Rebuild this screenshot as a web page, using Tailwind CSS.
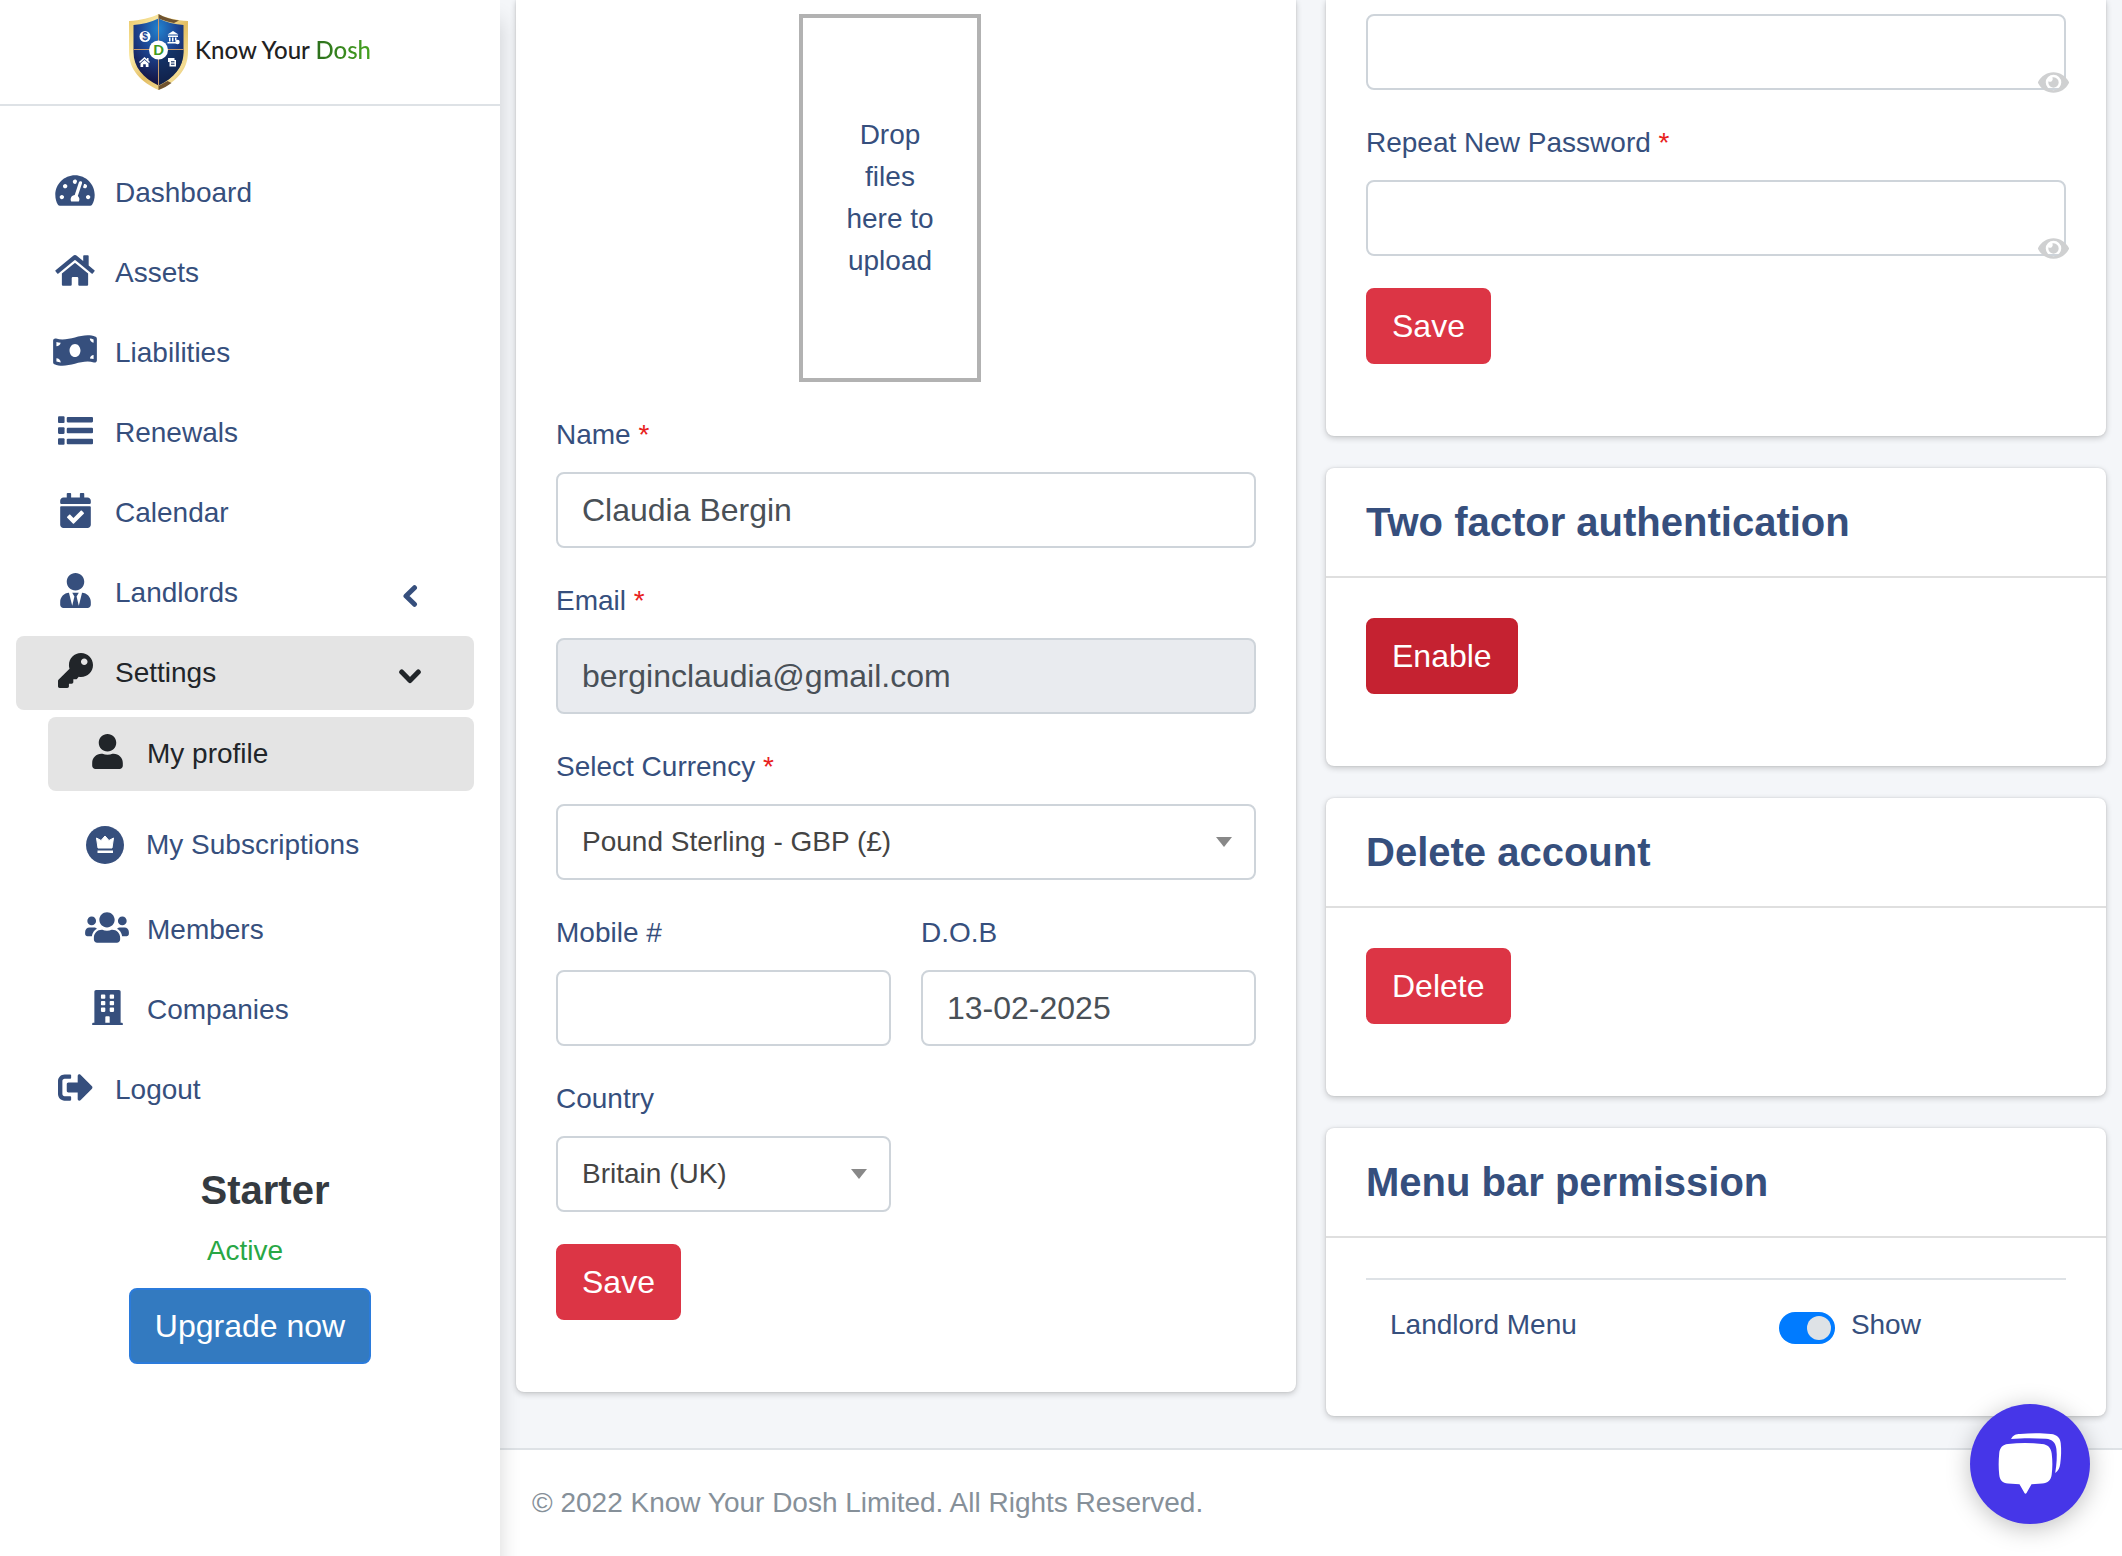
<!DOCTYPE html>
<html lang="en">

<head>
  <meta charset="UTF-8" />
  <meta name="viewport" content="width=device-width, initial-scale=1.0" />
  <title>My profile - Know Your Dosh</title>
  <script src="https://cdn.jsdelivr.net/npm/@tailwindcss/browser@4"></script>
</head>

<body class="flex min-h-screen bg-[#f4f6f9] font-['Liberation_Sans',Arial,sans-serif] text-[28px] leading-[42px] text-[#364f7d]">

  <!-- Sidebar -->
  <aside class="relative z-10 w-[500px] shrink-0 bg-white shadow-[0_20px_20px_rgba(0,0,0,0.16)]">
    <a href="#" class="flex h-[106px] items-center justify-center gap-[7px] border-b-2 border-[#dee2e6]">
      <svg class="h-[76px] w-[59px]" viewBox="0 0 59 76" aria-hidden="true">
        <defs>
          <linearGradient id="gold" x1="0" y1="0" x2="1" y2="1">
            <stop offset="0" stop-color="#e9c766" />
            <stop offset=".3" stop-color="#fbeaa8" />
            <stop offset=".55" stop-color="#e3bd62" />
            <stop offset=".8" stop-color="#f3dc93" />
            <stop offset="1" stop-color="#c99d45" />
          </linearGradient>
          <radialGradient id="navy" cx=".5" cy=".15" r=".8">
            <stop offset="0" stop-color="#2283cf" />
            <stop offset=".45" stop-color="#1d4796" />
            <stop offset="1" stop-color="#151545" />
          </radialGradient>
        </defs>
        <path fill="url(#gold)" d="M29.500 0C22 4 11 6.500 0 7v31c0 18 12 30 29.500 38C47 68 59 56 59 38V7C48 6.500 37 4 29.500 0z" />
        <path fill="#6f5330" d="M29.500 0v4.500C35 7 40 8 45 9l5-2.500C42 5.500 35 3 29.500 0zM29.500 76v-4l9-5 4 2c-4 3-8 5-13 7z" />
        <path fill="url(#navy)" d="M29.500 4.500C22 8 13 10.500 4.500 11v27c0 15 9.500 26 25 33.500C45 64 54.500 53 54.500 38V11C46 10.500 37 8 29.500 4.500z" />
        <path fill="#0f2c50" opacity=".6" d="M29.500 35.500h25V38c0 15-9.500 26-25 33.500z" />
        <path stroke="#c99a6a" stroke-width="1" d="M29.500 4.500v67M4.500 35.500h50" />
        <circle cx="29.500" cy="36" r="9.500" fill="#fff" />
        <text x="29.500" y="41" text-anchor="middle" font-family="Lato" font-size="14" font-weight="900" fill="#3f9a22">D</text>
        <circle cx="16" cy="22.500" r="5.500" fill="#fff" />
        <text x="16" y="26" text-anchor="middle" font-family="Liberation Sans" font-size="10" font-weight="700" fill="#1d4796">$</text>
        <g fill="#fff">
          <path d="M44 17l5.500 3.500h-11zM39 21.500h10V23H39zM40 23.500h1.500v4H40zM43 23.500h1.500v4H43zM46 23.500h1.500v3H46zM38.500 28H47v1.500h-8.500z" />
          <circle cx="48.500" cy="28" r="2.200" />
          <path d="M15.500 43L10 48l1 1 4.500-4 4.500 4 1-1-1.500-1.400V44h-1.500v1.200zM11.500 49.500l4-3.500 4 3.500V53h-2.700v-2.700h-2.600V53h-2.700z" />
          <path d="M39 44h6.500v2H47v6.500h-6.500V48H39z" />
        </g>
        <path stroke="#1b3566" stroke-width=".8" d="M42 47.500h3.500M42 49h3.500M42 50.500h3.500" />
      </svg>
      <span class="pb-1 font-['Lato',sans-serif] text-[24px] leading-[32px] font-medium text-[#222]">Know Your <span class="bg-linear-to-r from-[#2c6e1c] to-[#45a31f] bg-clip-text text-transparent">Dosh</span></span>
    </a>

    <nav class="mr-[26px] ml-4 pt-[50px]">
      <ul class="flex flex-col gap-1.5">
        <li>
          <a href="#" class="flex h-[74px] items-center gap-[13px] rounded-lg pl-8">
            <span class="flex w-[54px] justify-center pb-1.5">
              <svg class="h-[35px] w-[40px]" viewBox="0 0 576 512" fill="currentColor"><path d="M288 32C128.940 32 0 160.940 0 320c0 52.800 14.250 102.260 39.060 144.800 5.610 9.620 16.300 15.200 27.440 15.200h443c11.140 0 21.830-5.580 27.440-15.200C561.750 422.260 576 372.800 576 320c0-159.060-128.940-288-288-288zm0 64c14.710 0 26.580 10.130 30.320 23.650-1.110 2.260-2.640 4.230-3.450 6.670l-9.220 27.670c-5.130 3.490-10.970 6.010-17.640 6.010-17.670 0-32-14.330-32-32S270.330 96 288 96zM96 384c-17.670 0-32-14.330-32-32s14.330-32 32-32 32 14.330 32 32-14.330 32-32 32zm48-160c-17.670 0-32-14.330-32-32s14.330-32 32-32 32 14.330 32 32-14.330 32-32 32zm246.770-72.410l-61.330 184C343.130 347.330 352 364.540 352 384c0 11.720-3.380 22.550-8.880 32H232.880c-5.500-9.450-8.880-20.280-8.880-32 0-33.940 26.500-61.430 59.900-63.590l61.340-184.010c4.170-12.560 17.730-19.450 30.360-15.170 12.570 4.190 19.350 17.790 15.170 30.360zm14.660 57.200l15.520-46.550c3.470-1.290 7.130-2.230 11.050-2.230 17.670 0 32 14.330 32 32s-14.330 32-32 32c-11.380-.01-20.890-6.280-26.570-15.220zM480 384c-17.670 0-32-14.330-32-32s14.330-32 32-32 32 14.330 32 32-14.330 32-32 32z" /></svg>
            </span>
            Dashboard
          </a>
        </li>
        <li>
          <a href="#" class="flex h-[74px] items-center gap-[13px] rounded-lg pl-8">
            <span class="flex w-[54px] justify-center pb-1.5">
              <svg class="h-[35px] w-[40px]" viewBox="0 0 576 512" fill="currentColor"><path d="M280.370 148.260L96 300.110V464a16 16 0 0 0 16 16l112.060-.29a16 16 0 0 0 15.920-16V368a16 16 0 0 1 16-16h64a16 16 0 0 1 16 16v95.640a16 16 0 0 0 16 16.050L464 480a16 16 0 0 0 16-16V300L295.670 148.260a12.190 12.190 0 0 0-15.300 0zM571.600 251.470L488 182.560V44.050a12 12 0 0 0-12-12h-56a12 12 0 0 0-12 12v72.610L318.470 43a48 48 0 0 0-61 0L4.340 251.470a12 12 0 0 0-1.600 16.900l25.500 31A12 12 0 0 0 45.150 301l235.220-193.740a12.190 12.190 0 0 1 15.300 0L530.900 301a12 12 0 0 0 16.900-1.600l25.500-31a12 12 0 0 0-1.700-16.930z" /></svg>
            </span>
            Assets
          </a>
        </li>
        <li>
          <a href="#" class="flex h-[74px] items-center gap-[13px] rounded-lg pl-8">
            <span class="flex w-[54px] justify-center pb-1.5">
              <svg class="h-[35px] w-[44px]" viewBox="0 0 640 512" fill="currentColor"><path d="M621.160 54.460C582.370 38.190 543.550 32 504.750 32c-123.170-.01-246.330 62.340-369.500 62.340-30.890 0-61.760-3.920-92.650-13.720-3.470-1.100-6.950-1.620-10.350-1.620C15.040 79 0 92.320 0 110.810v317.260c0 12.630 7.230 24.600 18.840 29.460C57.630 473.810 96.450 480 135.250 480c123.170 0 246.340-62.350 369.510-62.350 30.890 0 61.760 3.920 92.650 13.720 3.470 1.100 6.950 1.620 10.350 1.620 17.210 0 32.250-13.320 32.250-31.810V83.930c-.01-12.640-7.240-24.600-18.850-29.470zM48 132.220c20.120 5.040 41.120 7.570 62.720 8.930C104.840 170.540 79 192.690 48 192.690v-60.470zm0 285v-47.780c34.370 0 62.180 27.270 63.710 61.400-22.530-1.810-43.590-6.310-63.710-13.620zM320 352c-44.190 0-80-42.990-80-96 0-53.020 35.820-96 80-96s80 42.980 80 96c0 53.030-35.830 96-80 96zm272 27.780c-17.520-4.390-35.710-6.850-54.320-8.440 5.870-26.080 27.500-45.880 54.320-49.280v57.720zm0-236.110c-30.890-3.910-54.860-29.700-55.810-61.550 19.540 2.170 38.090 6.230 55.810 12.660v48.890z" /></svg>
            </span>
            Liabilities
          </a>
        </li>
        <li>
          <a href="#" class="flex h-[74px] items-center gap-[13px] rounded-lg pl-8">
            <span class="flex w-[54px] justify-center pb-1.5">
              <svg class="h-[35px] w-[35px]" viewBox="0 0 512 512" fill="currentColor">
                <rect x="0" y="48" width="96" height="98" rx="16" /><rect x="0" y="208" width="96" height="98" rx="16" /><rect x="0" y="368" width="96" height="98" rx="16" />
                <rect x="128" y="58" width="384" height="80" rx="16" /><rect x="128" y="217" width="384" height="80" rx="16" /><rect x="128" y="377" width="384" height="80" rx="16" />
              </svg>
            </span>
            Renewals
          </a>
        </li>
        <li>
          <a href="#" class="flex h-[74px] items-center gap-[13px] rounded-lg pl-8">
            <span class="flex w-[54px] justify-center pb-1.5">
              <svg class="h-[35px] w-[31px]" viewBox="0 0 448 512" fill="currentColor"><path d="M436 160H12c-6.627 0-12-5.373-12-12v-36c0-26.510 21.490-48 48-48h48V12c0-6.627 5.373-12 12-12h40c6.627 0 12 5.373 12 12v52h128V12c0-6.627 5.373-12 12-12h40c6.627 0 12 5.373 12 12v52h48c26.510 0 48 21.490 48 48v36c0 6.627-5.373 12-12 12zM12 192h424c6.627 0 12 5.373 12 12v260c0 26.510-21.490 48-48 48H48c-26.510 0-48-21.490-48-48V204c0-6.627 5.373-12 12-12zm333.296 95.947l-28.169-28.398c-4.667-4.705-12.265-4.736-16.970-.068L194.120 364.665l-45.980-46.352c-4.667-4.705-12.266-4.736-16.971-.068l-28.397 28.170c-4.705 4.667-4.736 12.265-.068 16.970l82.601 83.269c4.667 4.705 12.265 4.736 16.970.068l142.953-141.805c4.705-4.667 4.736-12.265.068-16.970z" /></svg>
            </span>
            Calendar
          </a>
        </li>
        <li>
          <a href="#" class="flex h-[74px] items-center gap-[13px] rounded-lg pr-[53px] pl-8">
            <span class="flex w-[54px] justify-center pb-1.5">
              <svg class="h-[35px] w-[31px]" viewBox="0 0 448 512" fill="currentColor"><path d="M224 256c70.700 0 128-57.300 128-128S294.700 0 224 0 96 57.300 96 128s57.300 128 128 128zm95.800 32.600L272 480l-32-136 32-56h-96l32 56-32 136-47.800-191.400C56.900 292 0 350.300 0 422.400V464c0 26.500 21.500 48 48 48h352c26.500 0 48-21.500 48-48v-41.600c0-72.100-56.900-130.400-128.200-133.800z" /></svg>
            </span>
            Landlords
            <svg class="mt-1.5 ml-auto size-[22px]" viewBox="0 0 22 22" fill="none" stroke="currentColor" stroke-width="5" stroke-linecap="round" stroke-linejoin="round"><path d="M15.500 2.700L7 11l8.500 8.300" /></svg>
          </a>
        </li>
        <li>
          <a href="#" class="flex h-[74px] items-center gap-[13px] rounded-lg bg-[#e4e4e4] pr-[53px] pl-8 text-[#212529]">
            <span class="flex w-[54px] justify-center pb-1.5">
              <svg class="h-[35px] w-[35px]" viewBox="0 0 512 512" fill="currentColor"><path d="M512 176.001C512 273.203 433.202 352 336 352c-11.220 0-22.190-1.062-32.827-3.069l-24.012 27.014A23.999 23.999 0 0 1 261.223 384H224v40c0 13.255-10.745 24-24 24h-40v40c0 13.255-10.745 24-24 24H24c-13.255 0-24-10.745-24-24v-78.059c0-6.365 2.529-12.470 7.029-16.971l161.802-161.802C163.108 213.814 160 195.271 160 176 160 78.798 238.797.001 335.999 0 433.488-.001 512 78.511 512 176.001zM336 128c0 26.510 21.490 48 48 48s48-21.490 48-48-21.490-48-48-48-48 21.490-48 48z" /></svg>
            </span>
            Settings
            <svg class="mt-1.5 ml-auto size-[22px]" viewBox="0 0 22 22" fill="none" stroke="currentColor" stroke-width="5" stroke-linecap="round" stroke-linejoin="round"><path d="M2.700 7L11 15.500 19.300 7" /></svg>
          </a>
          <ul class="flex flex-col pt-[7px] pl-8">
            <li>
              <a href="#" class="mb-1.5 flex h-[74px] items-center gap-[13px] rounded-lg bg-[#e4e4e4] pl-8 text-[#212529]">
                <span class="flex w-[54px] justify-center pb-1.5">
                  <svg class="h-[35px] w-[31px]" viewBox="0 0 448 512" fill="currentColor"><path d="M224 256c70.700 0 128-57.300 128-128S294.700 0 224 0 96 57.300 96 128s57.300 128 128 128zm89.600 32h-16.700c-22.200 10.200-46.900 16-72.900 16s-50.600-5.800-72.900-16h-16.700C60.200 288 0 348.200 0 422.400V464c0 26.500 21.500 48 48 48h352c26.500 0 48-21.500 48-48v-41.600c0-74.200-60.200-134.400-134.400-134.400z" /></svg>
                </span>
                My profile
              </a>
            </li>
            <li>
              <a href="#" class="flex h-24 items-center gap-4 rounded-lg pl-8">
                <span class="flex w-[50px] justify-center">
                  <svg class="size-[38px]" viewBox="0 0 38 38">
                    <circle cx="19" cy="19" r="19" fill="currentColor" />
                    <path fill="#fff" stroke="#fff" stroke-linejoin="round" d="M10.500 12l4.500 2.500 4-4.500 4 4.500 4.500-2.500-1.500 10H12z" />
                    <path fill="#fff" d="M11.500 24.500h15.500v2.500H11.500z" />
                  </svg>
                </span>
                My Subscriptions
              </a>
            </li>
            <li>
              <a href="#" class="mb-1.5 flex h-[74px] items-center gap-[13px] rounded-lg pl-8">
                <span class="flex w-[54px] justify-center pb-1.5">
                  <svg class="h-[35px] w-[44px]" viewBox="0 0 640 512" fill="currentColor"><path d="M96 224c35.300 0 64-28.700 64-64s-28.700-64-64-64-64 28.700-64 64 28.700 64 64 64zm448 0c35.300 0 64-28.700 64-64s-28.700-64-64-64-64 28.700-64 64 28.700 64 64 64zm32 32h-64c-17.600 0-33.500 7.100-45.100 18.600 40.300 22.100 68.900 62 75.100 109.400h66c17.700 0 32-14.300 32-32v-32c0-35.300-28.700-64-64-64zm-256 0c61.900 0 112-50.100 112-112S381.900 32 320 32 208 82.100 208 144s50.100 112 112 112zm76.800 32h-8.300c-20.800 10-43.900 16-68.500 16s-47.600-6-68.500-16h-8.300C179.600 288 128 339.600 128 403.200V432c0 26.500 21.500 48 48 48h288c26.500 0 48-21.500 48-48v-28.800c0-63.600-51.600-115.200-115.200-115.200zm-223.700-13.400C161.500 263.100 145.600 256 128 256H64c-35.300 0-64 28.700-64 64v32c0 17.700 14.300 32 32 32h65.900c6.300-47.400 34.900-87.300 75.200-109.400z" /></svg>
                </span>
                Members
              </a>
            </li>
            <li>
              <a href="#" class="flex h-[74px] items-center gap-[13px] rounded-lg pl-8">
                <span class="flex w-[54px] justify-center pb-1.5">
                  <svg class="h-[35px] w-[31px]" viewBox="0 0 448 512" fill="currentColor"><path d="M436 480h-20V24c0-13.255-10.745-24-24-24H56C42.745 0 32 10.745 32 24v456H12c-6.627 0-12 5.373-12 12v20h448v-20c0-6.627-5.373-12-12-12zM128 76c0-6.627 5.373-12 12-12h40c6.627 0 12 5.373 12 12v40c0 6.627-5.373 12-12 12h-40c-6.627 0-12-5.373-12-12V76zm0 96c0-6.627 5.373-12 12-12h40c6.627 0 12 5.373 12 12v40c0 6.627-5.373 12-12 12h-40c-6.627 0-12-5.373-12-12v-40zm52 148h-40c-6.627 0-12-5.373-12-12v-40c0-6.627 5.373-12 12-12h40c6.627 0 12 5.373 12 12v40c0 6.627-5.373 12-12 12zm76 160h-64v-84c0-6.627 5.373-12 12-12h40c6.627 0 12 5.373 12 12v84zm64-172c0 6.627-5.373 12-12 12h-40c-6.627 0-12-5.373-12-12v-40c0-6.627 5.373-12 12-12h40c6.627 0 12 5.373 12 12v40zm0-96c0 6.627-5.373 12-12 12h-40c-6.627 0-12-5.373-12-12v-40c0-6.627 5.373-12 12-12h40c6.627 0 12 5.373 12 12v40zm0-96c0 6.627-5.373 12-12 12h-40c-6.627 0-12-5.373-12-12V76c0-6.627 5.373-12 12-12h40c6.627 0 12 5.373 12 12v40z" /></svg>
                </span>
                Companies
              </a>
            </li>
          </ul>
        </li>
        <li>
          <a href="#" class="flex h-[74px] items-center gap-[13px] rounded-lg pl-8">
            <span class="flex w-[54px] justify-center pb-1.5">
              <svg class="h-[35px] w-[35px]" viewBox="0 0 512 512" fill="currentColor"><path d="M497 273L329 441c-15 15-41 4.500-41-17v-96H152c-13.300 0-24-10.700-24-24v-96c0-13.300 10.700-24 24-24h136V88c0-21.400 25.900-32 41-17l168 168c9.300 9.400 9.300 24.600 0 34zM192 436v-40c0-6.600-5.400-12-12-12H96c-17.700 0-32-14.300-32-32V160c0-17.700 14.300-32 32-32h84c6.600 0 12-5.400 12-12V76c0-6.600-5.400-12-12-12H96c-53 0-96 43-96 96v192c0 53 43 96 96 96h84c6.600 0 12-5.400 12-12z" /></svg>
            </span>
            Logout
          </a>
        </li>
      </ul>
    </nav>

    <!-- Current plan -->
    <div class="flex flex-col items-center gap-4 pt-[39px] text-center">
      <h2 class="pl-[30px] text-[40px] leading-[48px] font-bold text-[#343a40]">Starter</h2>
      <p class="pr-2.5 text-[#28a745]">Active</p>
      <button type="button" class="rounded-lg border-2 border-[#2b7bdb] bg-[#337ac0] px-6 py-3 text-[32px] leading-[48px] text-white">Upgrade now</button>
    </div>
  </aside>

  <div class="flex min-w-0 flex-1 flex-col">
    <main class="grid flex-1 grid-cols-2 items-start gap-[30px] px-4">

      <!-- Profile form -->
      <section class="rounded-b-lg bg-white px-10 pt-3.5 pb-[72px] shadow-[0_0_2px_rgba(0,0,0,0.13),0_2px_6px_rgba(0,0,0,0.2)]">
        <form class="flex flex-col gap-8">
          <button type="button" class="mr-8 w-[182px] self-center border-4 border-[#b2b2b2] px-8 py-24 text-center">Drop files here to upload</button>

          <div class="flex flex-col gap-4">
            <label for="name">Name <span class="text-[#e8211d]">*</span></label>
            <input id="name" type="text" value="Claudia Bergin" class="h-[76px] w-full rounded-lg border-2 border-[#ced4da] bg-white px-6 text-[32px] text-[#495057]" />
          </div>

          <div class="flex flex-col gap-4">
            <label for="email">Email <span class="text-[#e8211d]">*</span></label>
            <input id="email" type="email" value="berginclaudia@gmail.com" readonly class="h-[76px] w-full rounded-lg border-2 border-[#ced4da] bg-[#e9ebef] px-6 text-[32px] text-[#495057]" />
          </div>

          <div class="flex flex-col gap-4">
            <label for="currency">Select Currency <span class="text-[#e8211d]">*</span></label>
            <div class="relative">
              <select id="currency" class="h-[76px] w-full appearance-none rounded-lg border-2 border-[#ced4da] bg-white px-6 text-[#444]">
                <option>Pound Sterling - GBP (£)</option>
              </select>
              <span class="pointer-events-none absolute top-[33px] right-6 border-x-8 border-t-10 border-x-transparent border-t-[#888]"></span>
            </div>
          </div>

          <div class="grid grid-cols-2 gap-x-[30px] gap-y-8">
            <div class="flex flex-col gap-4">
              <label for="mobile">Mobile #</label>
              <input id="mobile" type="tel" class="h-[76px] w-full rounded-lg border-2 border-[#ced4da] bg-white px-6 text-[32px] text-[#495057]" />
            </div>
            <div class="flex flex-col gap-4">
              <label for="dob">D.O.B</label>
              <input id="dob" type="text" value="13-02-2025" class="h-[76px] w-full rounded-lg border-2 border-[#ced4da] bg-white px-6 text-[32px] text-[#495057]" />
            </div>
            <div class="flex flex-col gap-4">
              <label for="country">Country</label>
              <div class="relative">
                <select id="country" class="h-[76px] w-full appearance-none rounded-lg border-2 border-[#ced4da] bg-white px-6 text-[#444]">
                  <option>Britain (UK)</option>
                </select>
                <span class="pointer-events-none absolute top-[33px] right-6 border-x-8 border-t-10 border-x-transparent border-t-[#888]"></span>
              </div>
            </div>
          </div>

          <button type="submit" class="self-start rounded-lg border-2 border-[#dc3545] bg-[#dc3545] px-6 py-3 text-[32px] leading-[48px] text-white">Save</button>
        </form>
      </section>

      <div class="flex flex-col gap-8 pb-8">
        <!-- Password form -->
        <section class="rounded-b-lg bg-white px-10 pt-3.5 pb-[72px] shadow-[0_0_2px_rgba(0,0,0,0.13),0_2px_6px_rgba(0,0,0,0.2)]">
          <form class="flex flex-col gap-8">
            <div class="relative">
              <input type="password" aria-label="New Password" class="block h-[76px] w-full rounded-lg border-2 border-[#ced4da] bg-white px-6 text-[32px] text-[#495057]" />
              <button type="button" aria-label="Show password" class="absolute -right-[3px] -bottom-[3px] text-[#cfd0d1]">
                <svg class="block h-[21px] w-[31px]" viewBox="0 64 576 384" fill="currentColor"><path d="M572.520 241.400C518.290 135.590 410.930 64 288 64S57.680 135.640 3.480 241.410a32.350 32.350 0 0 0 0 29.190C57.710 376.410 165.070 448 288 448s230.320-71.640 284.520-177.410a32.350 32.350 0 0 0 0-29.190zM288 400a144 144 0 1 1 144-144 143.930 143.930 0 0 1-144 144zm0-240a95.310 95.310 0 0 0-25.310 3.790 47.850 47.850 0 0 1-66.900 66.900A95.780 95.780 0 1 0 288 160z" /></svg>
              </button>
            </div>

            <div class="flex flex-col gap-4">
              <label for="repeat">Repeat New Password <span class="text-[#e8211d]">*</span></label>
              <div class="relative">
                <input id="repeat" type="password" class="block h-[76px] w-full rounded-lg border-2 border-[#ced4da] bg-white px-6 text-[32px] text-[#495057]" />
                <button type="button" aria-label="Show password" class="absolute -right-[3px] -bottom-[3px] text-[#cfd0d1]">
                  <svg class="block h-[21px] w-[31px]" viewBox="0 64 576 384" fill="currentColor"><path d="M572.520 241.400C518.290 135.590 410.930 64 288 64S57.680 135.640 3.480 241.410a32.350 32.350 0 0 0 0 29.190C57.710 376.410 165.070 448 288 448s230.320-71.640 284.520-177.410a32.350 32.350 0 0 0 0-29.190zM288 400a144 144 0 1 1 144-144 143.930 143.930 0 0 1-144 144zm0-240a95.310 95.310 0 0 0-25.310 3.790 47.850 47.850 0 0 1-66.900 66.900A95.780 95.780 0 1 0 288 160z" /></svg>
                </button>
              </div>
            </div>

            <button type="submit" class="self-start rounded-lg border-2 border-[#dc3545] bg-[#dc3545] px-6 py-3 text-[32px] leading-[48px] text-white">Save</button>
          </form>
        </section>

        <!-- Two factor -->
        <section class="rounded-lg bg-white shadow-[0_0_2px_rgba(0,0,0,0.13),0_2px_6px_rgba(0,0,0,0.2)]">
          <h2 class="border-b-2 border-[#dfdfdf] px-10 py-[30px] text-[40px] leading-[48px] font-bold">Two factor authentication</h2>
          <div class="flex px-10 pt-10 pb-[72px]">
            <button type="button" class="rounded-lg border-2 border-[#c5212f] bg-[#c52231] px-6 py-3 text-[32px] leading-[48px] text-white">Enable</button>
          </div>
        </section>

        <!-- Delete account -->
        <section class="rounded-lg bg-white shadow-[0_0_2px_rgba(0,0,0,0.13),0_2px_6px_rgba(0,0,0,0.2)]">
          <h2 class="border-b-2 border-[#dfdfdf] px-10 py-[30px] text-[40px] leading-[48px] font-bold">Delete account</h2>
          <div class="flex px-10 pt-10 pb-[72px]">
            <button type="button" class="rounded-lg border-2 border-[#dc3545] bg-[#dc3545] px-6 py-3 text-[32px] leading-[48px] text-white">Delete</button>
          </div>
        </section>

        <!-- Menu bar permission -->
        <section class="rounded-lg bg-white shadow-[0_0_2px_rgba(0,0,0,0.13),0_2px_6px_rgba(0,0,0,0.2)]">
          <h2 class="border-b-2 border-[#dfdfdf] px-10 py-[30px] text-[40px] leading-[48px] font-bold">Menu bar permission</h2>
          <div class="px-10 pt-10 pb-[46px]">
            <div class="flex border-t-2 border-[#dee2e6] py-6">
              <span id="landlord-label" class="w-5/9 px-6">Landlord Menu</span>
              <label class="flex items-center gap-4 px-6">
                <input type="checkbox" checked aria-describedby="landlord-label" class="relative mt-1.5 h-8 w-14 appearance-none rounded-full bg-[#adb5bd] before:absolute before:top-1 before:left-1 before:size-6 before:rounded-full before:bg-[#dee2e6] before:content-[''] checked:bg-[#007bff] checked:before:left-7" />
                Show
              </label>
            </div>
          </div>
        </section>
      </div>
    </main>

    <footer class="border-t-2 border-[#dee2e6] bg-white p-8 text-[#869099]">© 2022 Know Your Dosh Limited. All Rights Reserved.</footer>
  </div>

  <!-- Chat launcher -->
  <button type="button" aria-label="Open chat" class="fixed right-8 bottom-8 z-20 size-[120px] rounded-full bg-[#4636e8] shadow-[0_4px_24px_rgba(0,0,0,0.25)]">
    <svg class="size-full" viewBox="0 0 120 120" fill="#fff">
      <path d="M41 35c2-4 5-5 9-5 10-1 22-1 31 0 6 .7 9 3.500 9.700 9 .8 7 .5 14-.5 21-.5 4-2 7-5 9 1.500-9 2-17 1.200-24-.8-6.500-4-9.500-10.500-10.200C65 34 52 34 41 35z" />
      <path d="M38 40c11-1.300 23-1.300 34 0 6 .7 9 3.700 9.700 9.500.9 7.500.9 14 0 21C81 76 78 79 72 79.500l-10.500.8-5 8.700c-.6 1-1.500 1-2 0l-5-8.700L38 79.500c-5.500-.5-8.300-3.500-8.800-9-.7-7-.7-13.500 0-21 .5-5.800 3.300-8.800 8.800-9.500z" />
    </svg>
  </button>

</body>

</html>
